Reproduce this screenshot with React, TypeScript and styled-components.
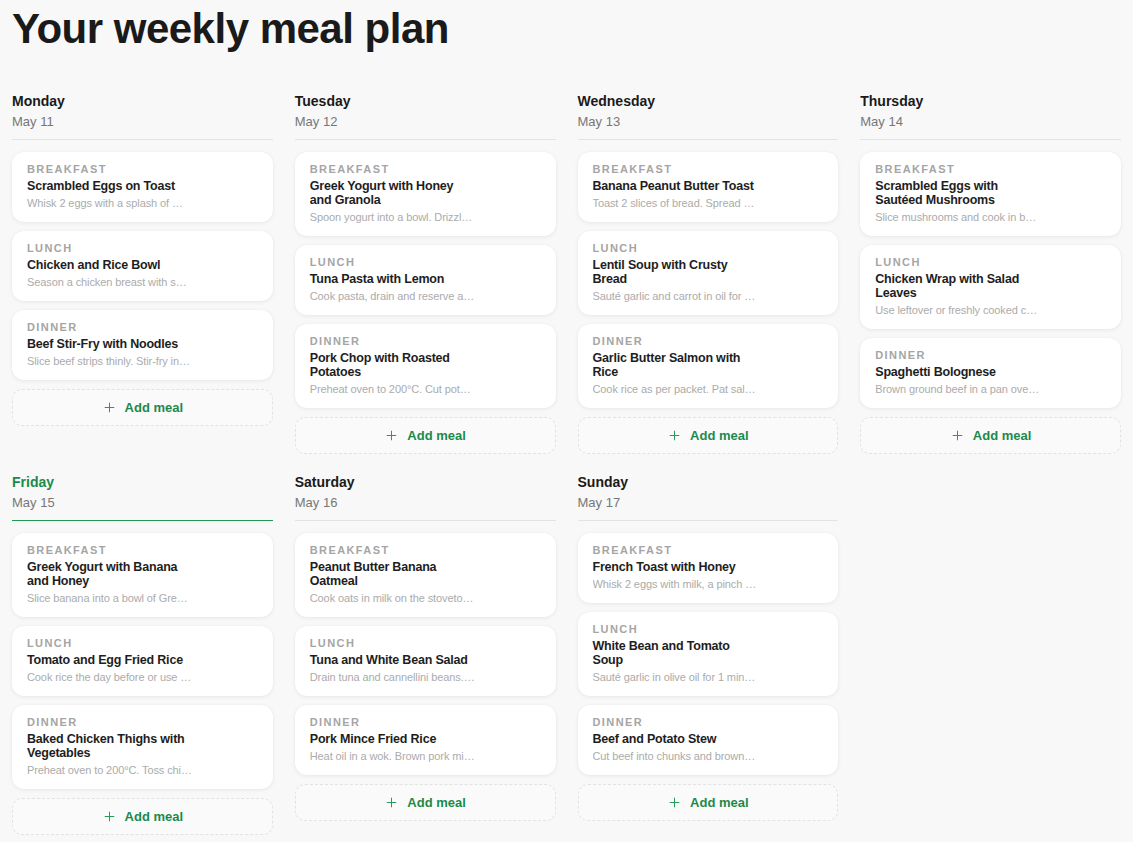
import React from 'react';
import styled, { createGlobalStyle } from 'styled-components';
import { Plus } from 'lucide-react';

type Meal = { type: string; title: string; desc: string };
type Day = { name: string; date: string; today?: boolean; meals: Meal[] };

const days: Day[] = [
  {
    name: 'Monday',
    date: 'May 11',
    meals: [
      { type: 'Breakfast', title: 'Scrambled Eggs on Toast', desc: 'Whisk 2 eggs with a splash of milk and butter.' },
      { type: 'Lunch', title: 'Chicken and Rice Bowl', desc: 'Season a chicken breast with salt and pepper.' },
      { type: 'Dinner', title: 'Beef Stir-Fry with Noodles', desc: 'Slice beef strips thinly. Stir-fry in oil.' },
    ],
  },
  {
    name: 'Tuesday',
    date: 'May 12',
    meals: [
      { type: 'Breakfast', title: 'Greek Yogurt with Honey and Granola', desc: 'Spoon yogurt into a bowl. Drizzle honey on top.' },
      { type: 'Lunch', title: 'Tuna Pasta with Lemon', desc: 'Cook pasta, drain and reserve a cup of water.' },
      { type: 'Dinner', title: 'Pork Chop with Roasted Potatoes', desc: 'Preheat oven to 200°C. Cut potatoes into wedges.' },
    ],
  },
  {
    name: 'Wednesday',
    date: 'May 13',
    meals: [
      { type: 'Breakfast', title: 'Banana Peanut Butter Toast', desc: 'Toast 2 slices of bread. Spread peanut butter.' },
      { type: 'Lunch', title: 'Lentil Soup with Crusty Bread', desc: 'Sauté garlic and carrot in oil for 5 minutes.' },
      { type: 'Dinner', title: 'Garlic Butter Salmon with Rice', desc: 'Cook rice as per packet. Pat salmon dry.' },
    ],
  },
  {
    name: 'Thursday',
    date: 'May 14',
    meals: [
      { type: 'Breakfast', title: 'Scrambled Eggs with Sautéed Mushrooms', desc: 'Slice mushrooms and cook in butter until golden.' },
      { type: 'Lunch', title: 'Chicken Wrap with Salad Leaves', desc: 'Use leftover or freshly cooked chicken.' },
      { type: 'Dinner', title: 'Spaghetti Bolognese', desc: 'Brown ground beef in a pan over medium heat.' },
    ],
  },
  {
    name: 'Friday',
    date: 'May 15',
    today: true,
    meals: [
      { type: 'Breakfast', title: 'Greek Yogurt with Banana and Honey', desc: 'Slice banana into a bowl of Greek yogurt.' },
      { type: 'Lunch', title: 'Tomato and Egg Fried Rice', desc: 'Cook rice the day before or use leftovers.' },
      { type: 'Dinner', title: 'Baked Chicken Thighs with Vegetables', desc: 'Preheat oven to 200°C. Toss chicken in oil.' },
    ],
  },
  {
    name: 'Saturday',
    date: 'May 16',
    meals: [
      { type: 'Breakfast', title: 'Peanut Butter Banana Oatmeal', desc: 'Cook oats in milk on the stovetop for 5 min.' },
      { type: 'Lunch', title: 'Tuna and White Bean Salad', desc: 'Drain tuna and cannellini beans. Mix together.' },
      { type: 'Dinner', title: 'Pork Mince Fried Rice', desc: 'Heat oil in a wok. Brown pork mince well.' },
    ],
  },
  {
    name: 'Sunday',
    date: 'May 17',
    meals: [
      { type: 'Breakfast', title: 'French Toast with Honey', desc: 'Whisk 2 eggs with milk, a pinch of cinnamon.' },
      { type: 'Lunch', title: 'White Bean and Tomato Soup', desc: 'Sauté garlic in olive oil for 1 minute.' },
      { type: 'Dinner', title: 'Beef and Potato Stew', desc: 'Cut beef into chunks and brown in batches.' },
    ],
  },
];

const GlobalStyle = createGlobalStyle`
  body {
    margin: 0;
    background: #f8f8f8;
    font-family: "Liberation Sans", Arial, sans-serif;
    color: #1c1c1c;
  }
`;

export default function App() {
  return (
    <>
      <GlobalStyle />
      <Page>
        <Title>Your weekly meal plan</Title>
        <Week>
          {days.map((day) => (
            <DayColumn key={day.name}>
              <DayHeader $today={day.today}>
                <DayName $today={day.today}>{day.name}</DayName>
                <DayDate>{day.date}</DayDate>
              </DayHeader>
              <MealList>
                {day.meals.map((meal) => (
                  <MealCard key={meal.type}>
                    <MealBody>
                      <MealType>{meal.type}</MealType>
                      <MealTitle>{meal.title}</MealTitle>
                      <MealDesc>{meal.desc}</MealDesc>
                    </MealBody>
                  </MealCard>
                ))}
                <AddButton>
                  <Plus size={15} strokeWidth={1.6} />
                  Add meal
                </AddButton>
              </MealList>
            </DayColumn>
          ))}
        </Week>
      </Page>
    </>
  );
}

const Page = styled.div`
    padding: 4px 12px 20px;
`;

const Title = styled.h1`
    margin: 0 0 39px;
    font-size: 42px;
    line-height: 50px;
    font-weight: 700;
    letter-spacing: -0.5px;
    color: #1a1a1a;
`;

const Week = styled.div`
    display: grid;
    grid-template-columns: repeat(4, 1fr);
    column-gap: 22px;
    row-gap: 20px;
    align-items: start;
`;

const DayColumn = styled.div`
    display: flex;
    flex-direction: column;
`;

const DayHeader = styled.div<{ $today?: boolean }>`
    display: flex;
    flex-direction: column;
    gap: 4px;
    padding-bottom: 9px;
    border-bottom: ${(p) => (p.$today ? '1.5px solid #1e9a55' : '1px solid #e3e3e3')};
    margin-bottom: 12px;
`;

const DayName = styled.div<{ $today?: boolean }>`
    font-size: 14px;
    line-height: 17px;
    font-weight: 700;
    color: ${(p) => (p.$today ? '#1a8a4c' : '#1a1a1a')};
`;

const DayDate = styled.div`
    font-size: 13px;
    line-height: 16px;
    color: #777;
`;

const MealList = styled.div`
    display: flex;
    flex-direction: column;
    gap: 9px;
`;

const MealCard = styled.div`
    background: #fff;
    border-radius: 12px;
    padding: 10px 15px 12px;
    box-shadow: 0 1px 4px rgba(0, 0, 0, 0.07), 0 0 1px rgba(0, 0, 0, 0.05);
`;

const MealBody = styled.div`
    display: flex;
    flex-direction: column;
    gap: 3px;
    max-width: 165px;
`;

const MealType = styled.div`
    font-size: 11px;
    line-height: 14px;
    font-weight: 700;
    letter-spacing: 1.4px;
    text-transform: uppercase;
    color: #a5a5a5;
`;

const MealTitle = styled.div`
    font-size: 12.5px;
    line-height: 14px;
    font-weight: 700;
    letter-spacing: -0.2px;
    color: #1e1e1e;
    max-width: 164px;
`;

const MealDesc = styled.div`
    font-size: 11px;
    line-height: 14px;
    letter-spacing: -0.1px;
    color: #ababab;
    white-space: nowrap;
    overflow: hidden;
    text-overflow: ellipsis;
`;

const AddButton = styled.button`
    display: flex;
    align-items: center;
    justify-content: center;
    gap: 8px;
    height: 37px;
    border: 1px dashed #e2e2e2;
    border-radius: 10px;
    background: #fafafa;
    color: #1a8a4c;
    font-family: inherit;
    font-size: 13px;
    font-weight: 700;
    cursor: pointer;

    svg {
        color: #2a9a5c;
    }
`;
